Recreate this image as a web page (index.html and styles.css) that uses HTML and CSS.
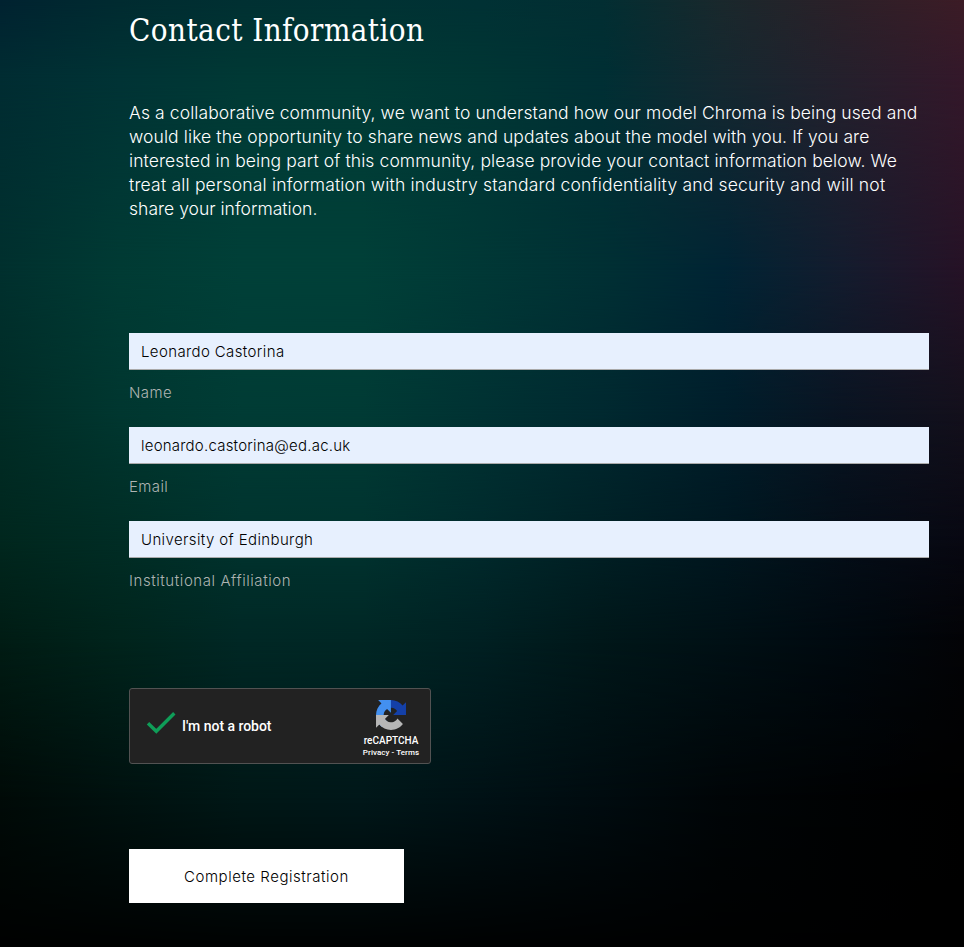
FILE: index.html
```
<!DOCTYPE html>
<html lang="en">
<head>
<meta charset="utf-8">
<title>Contact Information</title>
<link rel="stylesheet" href="styles.css">
</head>
<body>
<div class="aurora" aria-hidden="true">
  <div class="band b7"></div>
  <div class="band b6"></div>
  <div class="band b5"></div>
  <div class="band b4"></div>
  <div class="band b3"></div>
  <div class="band b2"></div>
  <div class="band b1"></div>
</div>
<main class="page">
  <h1 class="title">Contact Information</h1>
  <p class="intro">
    <span class="l1">As a collaborative community, we want to understand how our model Chroma is being used and</span><br>
    <span class="l2">would like the opportunity to share news and updates about the model with you. If you are</span><br>
    <span class="l3">interested in being part of this community, please provide your contact information below. We</span><br>
    <span class="l4">treat all personal information with industry standard confidentiality and security and will not</span><br>
    <span class="l5">share your information.</span>
  </p>
  <form class="form">
    <div class="field"><div class="input">Leonardo Castorina</div><label class="label">Name</label></div>
    <div class="field"><div class="input email">leonardo.castorina@ed.ac.uk</div><label class="label">Email</label></div>
    <div class="field"><div class="input">University of Edinburgh</div><label class="label long">Institutional Affiliation</label></div>
    <div class="captcha">
      <svg class="check" width="30" height="24" viewBox="0 0 30 24"><path d="M2 12.3 L10.3 20.3 L28.3 2.3" fill="none" stroke="#0f9d58" stroke-width="3.4"/></svg>
      <span class="robot">I'm not a robot</span>
      <div class="brand">
        <svg width="30" height="30" viewBox="0 0 64 64">
          <path fill="#1440a8" d="M64 31.955l-.033-1.37V4.687l-7.16 7.16C50.948 4.674 42.033.093 32.05.093c-10.4 0-19.622 4.96-25.458 12.64l11.736 11.86a15.55 15.55 0 0 1 4.754-5.334c2.05-1.6 4.952-2.906 8.968-2.906.485 0 .86.057 1.135.163 4.976.393 9.288 3.14 11.828 7.124l-8.307 8.307L64 31.953"/>
          <path fill="#4390f0" d="M31.862.094l-1.37.033H4.594l7.16 7.16C4.58 13.147 0 22.06 0 32.046c0 10.4 4.96 19.622 12.64 25.458L24.5 45.768a15.55 15.55 0 0 1-5.334-4.754c-1.6-2.05-2.906-4.952-2.906-8.968 0-.485.057-.86.163-1.135.393-4.976 3.14-9.288 7.124-11.828l8.307 8.307L31.86.095"/>
          <path fill="#b6b6b6" d="M.001 32.045l.033 1.37v25.898l7.16-7.16c5.86 7.173 14.774 11.754 24.76 11.754 10.4 0 19.622-4.96 25.458-12.64l-11.736-11.86a15.55 15.55 0 0 1-4.754 5.334c-2.05 1.6-4.952 2.906-8.968 2.906-.485 0-.86-.057-1.135-.163-4.976-.393-9.288-3.14-11.828-7.124l8.307-8.307c-10.522.04-22.4.066-27.295-.005"/>
        </svg>
        <div class="name">reCAPTCHA</div>
        <div class="links">Privacy - Terms</div>
      </div>
    </div>
    <button class="submit" type="button">Complete Registration</button>
  </form>
</main>
</body>
</html>
```
FILE: styles.css
```
* { box-sizing: border-box; }
body {
  margin: 0;
  position: relative;
  height: 947px;
  color: #fff;
  font-family: Inter, "Liberation Sans", sans-serif;
  background: #000;
}

/* Backdrop: each band fades out downward into the one stacked beneath it */
.aurora { position: absolute; inset: 0; z-index: -1; overflow: hidden; }
.band { position: absolute; inset: 0; mask-image: linear-gradient(#000 var(--from), transparent var(--to)); }
.b1 { --from: 0px; --to: 75px; background: linear-gradient(90deg, #002230, #002b30, #003032, #003233, #003134, #022e32, #1a282c, #2c2028, #3c1c26); }
.b2 { --from: 75px; --to: 270px; background: linear-gradient(90deg, #002c32, #003335, #003935, #003a35, #003634, #002f34, #152830, #25202c, #34182a); }
.b3 { --from: 270px; --to: 410px; background: linear-gradient(90deg, #00302e, #003b34, #004038, #004038, #003836, #003034, #002434, #141c2e, #261226); }
.b4 { --from: 410px; --to: 540px; background: linear-gradient(90deg, #002c26, #003730, #003c35, #003b35, #003233, #002930, #001e2b, #0a1422, #14101c); }
.b5 { --from: 540px; --to: 640px; background: linear-gradient(90deg, #00271e, #002d25, #00332e, #00332f, #002a2c, #002025, #001720, #040e18, #080812); }
.b6 { --from: 640px; --to: 800px; background: linear-gradient(90deg, #001c14, #00241c, #002825, #002725, #002022, #001719, #001015, #00090f, #030306); }
.b7 { --from: 800px; --to: 960px; background: linear-gradient(90deg, #000a07, #00110f, #001716, #001719, #001115, #000b0f, #000507, #000203, #000); }

.page { padding: 8px 0 0 129px; width: 929px; }
.title {
  margin: 0;
  height: 44px;
  font: 400 31px/44px "DejaVu Serif Condensed", "DejaVu Serif", serif;
  letter-spacing: .45px;
  white-space: nowrap;
}
.intro { margin: 49px 0 0; font-size: 17.5px; font-weight: 300; line-height: 24px; height: 120px; letter-spacing: .1px; white-space: nowrap; }
.l4 { letter-spacing: .19px; }
.l5 { letter-spacing: .02px; }
.form { margin-top: 112px; }
.field { height: 94px; }
.input { height: 37px; padding: 0 12px; background: #e7f0fe; border-bottom: 1px solid #aaa; color: #000; font-size: 15px; font-weight: 300; line-height: 37px; letter-spacing: .38px; }
.email { letter-spacing: .22px; }
.label { display: block; margin-top: 13px; font-size: 15px; line-height: 20px; letter-spacing: .4px; color: #aeb4b2; font-weight: 300; }
.long { letter-spacing: .57px; }
.captcha { margin-top: 73px; width: 302px; height: 76px; display: flex; align-items: center; padding-left: 16px; background: #222; border: 1px solid #525252; border-radius: 3px; font-family: Roboto, sans-serif; }
.check { margin-top: -7px; }
.robot { margin-left: 6px; font-size: 14px; font-weight: 500; line-height: 18px; width: 174px; letter-spacing: -.03px; }
.brand { width: 70px; text-align: center; height: 74px; padding-top: 11px; }
.brand svg { display: block; margin: 0 auto; }
.name { font-size: 10px; line-height: 12px; margin-top: 5px; font-weight: 500; }
.links { font-size: 8px; line-height: 10px; margin-top: 1px; font-weight: 500; letter-spacing: .05px; white-space: nowrap; }
.submit { display: block; margin-top: 85px; width: 275px; height: 54px; padding: 0; border: 0; background: #fff; color: #000; font-family: inherit; font-size: 15px; font-weight: 300; letter-spacing: .54px; }
```
